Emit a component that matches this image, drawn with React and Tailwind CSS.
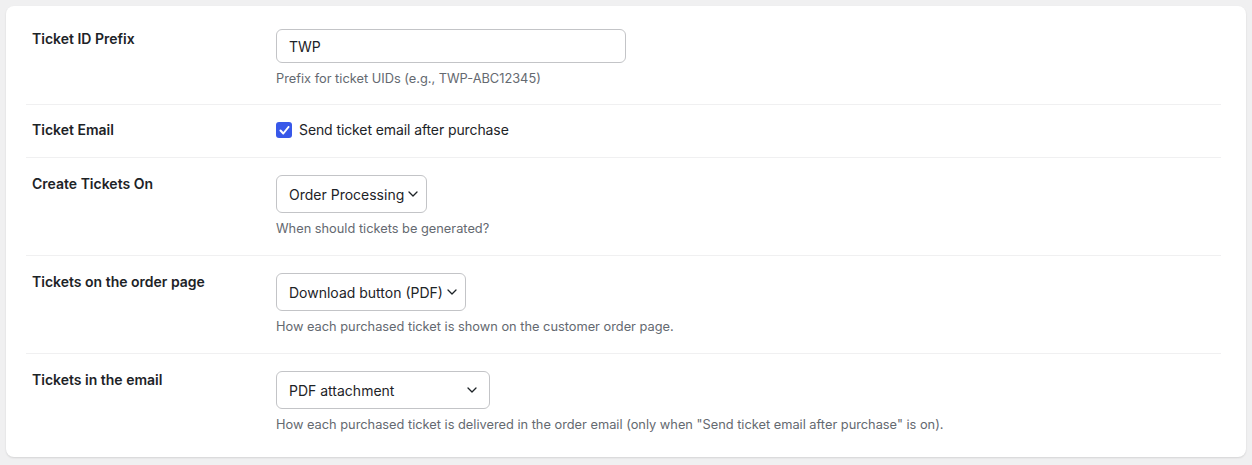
import React, { useState } from "react";

const font = { fontFamily: "Inter, 'Noto Sans', sans-serif" };

function Chevron() {
    return (
        <svg width="10" height="6" viewBox="0 0 10 6" fill="none" className="shrink-0">
            <path d="M1 1l4 4 4-4" stroke="#1d2327" strokeWidth="1.3" strokeLinecap="round" strokeLinejoin="round" />
        </svg>
    );
}

function Select({ value, width }) {
    return (
        <div
            className={`mt-px flex h-[38px] items-center justify-between gap-1 rounded-[6px] border border-[#c3c4c7] bg-white pl-3 pr-3 text-[14px] text-[#1d2327] ${width}`}
        >
            <span className="whitespace-nowrap">{value}</span>
            <Chevron />
        </div>
    );
}

function Row({ label, children, last = false, pad = "pt-4 pb-[17px]" }) {
    return (
        <div className={`flex ${pad} ${last ? "" : "border-b border-[#f0f0f1]"}`}>
            <div className="w-[250px] shrink-0 pl-[6px] text-[14px] font-semibold leading-5 text-[#1d2327]">
                {label}
            </div>
            <div className="flex flex-col">{children}</div>
        </div>
    );
}

function Help({ children }) {
    return <p className="mt-[7px] text-[12.8px] leading-[18px] text-[#646970]">{children}</p>;
}

export default function App() {
    const [prefix, setPrefix] = useState("TWP");
    const [sendEmail, setSendEmail] = useState(true);

    return (
        <div className="min-h-[465px] bg-[#f0f0f1] p-[6px]" style={font}>
            <div className="rounded-[8px] bg-white pl-5 pr-[25px] pt-[6px] pb-[6px] shadow-[0_1px_2px_rgba(0,0,0,0.12)]">
                <Row label="Ticket ID Prefix" pad="pt-[17px] pb-4">
                    <input
                        value={prefix}
                        onChange={(e) => setPrefix(e.target.value)}
                        className="h-[34px] w-[350px] rounded-[6px] border border-[#c3c4c7] px-3 text-[14px] text-[#1d2327] outline-none"
                        style={font}
                    />
                    <Help>Prefix for ticket UIDs (e.g., TWP-ABC12345)</Help>
                </Row>
                <Row label="Ticket Email" pad="pt-[15px] pb-[17px]">
                    <label className="flex items-center gap-[7px] text-[14px] leading-5 tracking-[-0.1px] text-[#1d2327]">
                        <button
                            type="button"
                            onClick={() => setSendEmail(!sendEmail)}
                            className={`flex h-4 w-4 items-center justify-center rounded-[3px] ${
                                sendEmail ? "bg-[#3858e9]" : "border border-[#8c8f94] bg-white"
                            }`}
                        >
                            {sendEmail && (
                                <svg width="11" height="9" viewBox="0 0 11 9" fill="none">
                                    <path d="M1.5 4.5l2.8 3 5.2-6.5" stroke="white" strokeWidth="2" strokeLinecap="round" strokeLinejoin="round" />
                                </svg>
                            )}
                        </button>
                        Send ticket email after purchase
                    </label>
                </Row>
                <Row label="Create Tickets On">
                    <Select value="Order Processing" width="w-[151px]" />
                    <Help>When should tickets be generated?</Help>
                </Row>
                <Row label="Tickets on the order page">
                    <Select value="Download button (PDF)" width="w-[190px]" />
                    <Help>How each purchased ticket is shown on the customer order page.</Help>
                </Row>
                <Row label="Tickets in the email" last>
                    <Select value="PDF attachment" width="w-[214px]" />
                    <Help>
                        How each purchased ticket is delivered in the order email (only when "Send ticket email after purchase" is on).
                    </Help>
                </Row>
            </div>
        </div>
    );
}
